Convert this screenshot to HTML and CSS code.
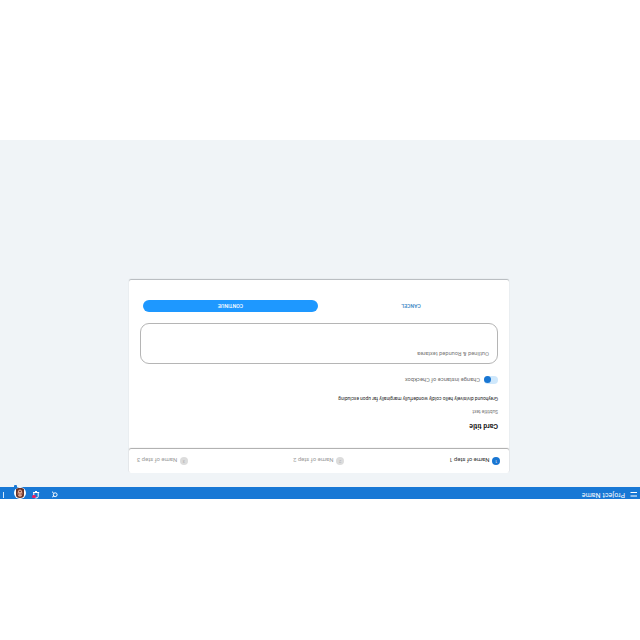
FILE: index.html
```
<!DOCTYPE html>
<html lang="en">
<head>
<meta charset="utf-8">
<title>Project Name</title>
<link rel="stylesheet" href="styles.css">
</head>
<body>
<div class="screen">
  <header class="bar">
    <svg class="menu" width="7" height="6" viewBox="0 0 7 6"><path d="M0 1h6.5M0 4.5h6.5"/></svg>
    <span class="brand">Project Name</span>
    <svg class="search" width="7" height="7" viewBox="0 0 7 7"><circle cx="2.8" cy="3.3" r="1.9"/><path d="M4.2 4.7 6 6.3M4.2 1.8 5.8 1"/></svg>
    <div class="alerts">
      <svg width="8" height="8" viewBox="0 0 8 8"><path d="M.8 6.5H7M1.8 6.3V2.5Q1.8 1 4 1T6.2 2.5V6.3M3 7.5h2"/></svg>
      <i class="alert-dot"></i>
    </div>
    <div class="avatar">
      <svg width="12" height="12" viewBox="0 0 12 12"><circle cx="6" cy="6" r="6" fill="#fff"/><path d="M2 10V4Q2 1 6 1t4 3v6L8 11H4z" fill="#693329"/><ellipse cx="6" cy="5.8" rx="2.3" ry="3.6" fill="#e3a58c"/><path d="M4 5h1.4M6.7 5H8M5 7.6h2" stroke="#632b26" stroke-width=".9"/></svg>
      <i class="status"></i>
    </div>
    <i class="more"></i>
  </header>
  <main class="page">
    <section class="card">
      <nav class="steps">
        <div class="step active"><b>1</b><span>Name of step 1</span></div>
        <div class="step"><b>2</b><span>Name of step 2</span></div>
        <div class="step"><b>3</b><span>Name of step 3</span></div>
      </nav>
      <div class="content">
        <h1>Card title</h1>
        <p class="subtitle">Subtitle text</p>
        <p class="description">Greyhound divisively hello coldly wonderfully marginally far upon excluding</p>
        <div class="option"><i class="toggle"></i><span>Change instance of Checkbox</span></div>
        <div class="textarea">Outlined &amp; Rounded textarea</div>
        <div class="actions"><span class="cancel">CANCEL</span><span class="continue">CONTINUE</span></div>
      </div>
    </section>
  </main>
</div>
</body>
</html>
```
FILE: styles.css
```
* { box-sizing: border-box; }
body { margin: 0; background: #fff; overflow: hidden; }
.screen { width: 640px; height: 640px; padding-top: 141px; transform: rotate(180deg); font-family: Roboto, sans-serif; background: #fff; }
.bar { height: 12px; display: flex; align-items: flex-start; background: #1878d5; color: #fff; padding-left: 2.5px; }
.bar svg { display: block; fill: none; stroke: #fff; stroke-width: 1; }
.menu { margin-top: 1.5px; }
.brand { margin-left: 5.5px; line-height: 9px; font-size: 6.9px; font-weight: 400; letter-spacing: .12px; white-space: nowrap; flex: 1; }
.search { margin: 1px 11px 0 0; }
.alerts { position: relative; margin: 0 6.5px 0 0; }
.alert-dot { position: absolute; left: 4px; top: 1px; width: 4px; height: 3px; border-radius: 2px; background: #e91e63; }
.avatar { position: relative; width: 12px; margin-right: 10px; }
.avatar .status { position: absolute; left: 9px; top: 10px; width: 3px; height: 4px; border-radius: 1px; background: #1878d5; }
.avatar svg { stroke: none; }
.more { width: 1px; height: 6px; margin: 1px 3px 0 0; background: #d7e9fa; }
.page { height: 347px; padding: 14px 0 0 131px; background: #f0f4f7; }
.card { width: 380px; height: 193px; background: #fff; border-radius: 2px; box-shadow: 0 1px 1px #b4b9bc; }
.steps { height: 24px; display: flex; justify-content: space-between; align-items: center; padding: 0 8px 0 8.5px; border-radius: 2px; box-shadow: 0 1px 1px #aaa; }
.step { display: flex; align-items: center; gap: 2.5px; color: #9a9a9a; font-size: 6px; letter-spacing: -.05px; white-space: nowrap; }
.step b { width: 8.5px; height: 8.5px; border-radius: 50%; background: #dcdcdc; color: #aaa; font-size: 4px; line-height: 8.5px; text-align: center; font-weight: 400; }
.active { color: #333; }
.active b { background: #1976d2; color: #fff; }
.content { padding: 17.5px 11px 0; }
h1 { margin: 0; font-size: 7px; line-height: 10px; font-weight: 700; color: #222; }
p { margin: 0; white-space: nowrap; }
.subtitle { margin-top: 6px; font-size: 4.8px; line-height: 7px; color: #777; }
.description { margin-top: 6px; font-size: 4.83px; line-height: 7px; color: #222; }
.option { margin-top: 10.5px; height: 10px; display: flex; align-items: center; gap: 4px; color: #6b6b6b; font-size: 5.7px; white-space: nowrap; }
.toggle { width: 14px; height: 8px; border-radius: 4px; background: #cfe8fc; display: flex; align-items: center; justify-content: flex-end; }
.toggle::after { content: ""; width: 7px; height: 7px; border-radius: 50%; background: #1976d2; }
.textarea { margin-top: 11px; height: 41px; border: 1px solid #b5b5b5; border-radius: 9px; padding: 5px 8px; font-size: 5.7px; line-height: 8px; color: #777; }
.actions { margin: 11px 3px 0 0; display: grid; grid-template-columns: 1fr 175px; gap: 6px; align-items: center; text-align: center; font-size: 5.2px; font-weight: 500; line-height: 12px; }
.cancel { color: #3783c2; }
.continue { height: 12px; border-radius: 6px; background: #1e98ff; color: #fff; }
```
